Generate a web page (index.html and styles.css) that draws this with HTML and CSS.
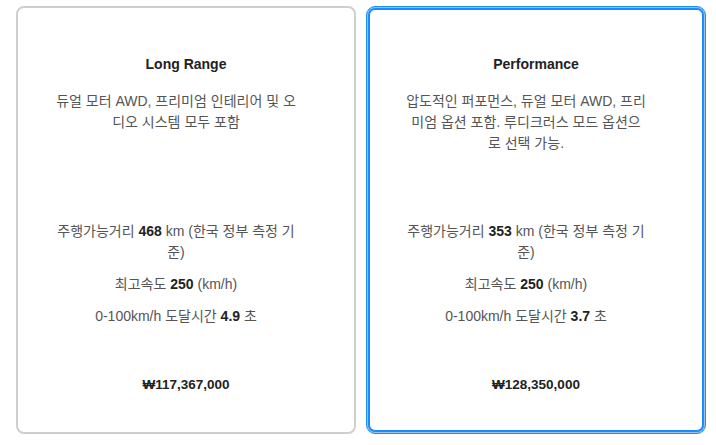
FILE: index.html
```html
<!DOCTYPE html>
<html lang="ko">
<head>
<meta charset="utf-8">
<link rel="stylesheet" href="styles.css">
</head>
<body>
<div class="cards">
  <div class="card">
    <h3 class="title">Long Range</h3>
    <p class="desc">듀얼 모터 AWD, 프리미엄 인테리어 및 오디오 시스템 모두 포함</p>
    <div class="specs">
      <p>주행가능거리 <b>468</b> km (한국 정부 측정 기준)</p>
      <p>최고속도 <b>250</b> (km/h)</p>
      <p>0-100km/h 도달시간 <b>4.9</b> 초</p>
    </div>
    <div class="price">₩117,367,000</div>
  </div>
  <div class="card selected">
    <h3 class="title">Performance</h3>
    <p class="desc">압도적인 퍼포먼스, 듀얼 모터 AWD, 프리미엄 옵션 포함. 루디크러스 모드 옵션으로 선택 가능.</p>
    <div class="specs">
      <p>주행가능거리 <b>353</b> km (한국 정부 측정 기준)</p>
      <p>최고속도 <b>250</b> (km/h)</p>
      <p>0-100km/h 도달시간 <b>3.7</b> 초</p>
    </div>
    <div class="price">₩128,350,000</div>
  </div>
</div>
</body>
</html>
```
FILE: styles.css
```css
html, body {
  margin: 0;
  padding: 0;
  background: #fff;
}
body {
  font-family: "Liberation Sans", Arial, "Noto Sans CJK KR", sans-serif;
  color: #555;
}
.cards {
  display: grid;
  grid-template-columns: 340px 340px;
  gap: 10px;
  padding: 6px 10px 0 16px;
}
.card {
  box-sizing: border-box;
  height: 428px;
  border: 2px solid #cfcfcf;
  border-radius: 8px;
  padding: 48px 48px 0;
  text-align: center;
  background: #fff;
}
.card.selected {
  border: 1px solid #1a8cff;
  border-radius: 9px;
  box-shadow: inset 0 0 0 1px #9cc4ea, inset 0 0 0 3px #1a8cff;
  padding: 49px 49px 0;
}
.title {
  margin: 0;
  font-size: 14px;
  line-height: 17px;
  font-weight: bold;
  color: #222;
}
.desc {
  margin: 18px 10px 0 -10px;
  height: 130px;
  font-size: 14px;
  line-height: 21px;
}
.specs {
  margin: 0 10px 0 -10px;
}
.specs p {
  margin: 0 0 11px;
  font-size: 14px;
  line-height: 21px;
}
.specs b {
  color: #222;
}
.price {
  margin-top: 49px;
  font-size: 13.5px;
  line-height: 17px;
  font-weight: bold;
  color: #222;
}
```
